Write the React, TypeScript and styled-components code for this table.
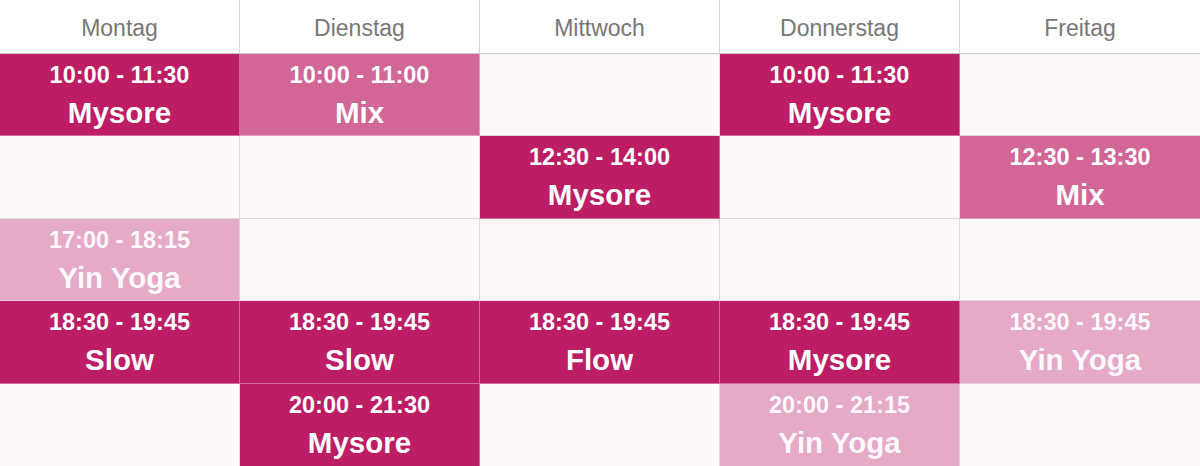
import React from "react";
import styled, { createGlobalStyle } from "styled-components";

const GlobalStyle = createGlobalStyle`
  html, body { margin: 0; padding: 0; background: #ffffff; }
  body { font-family: "Liberation Sans", Arial, sans-serif; }
  * { box-sizing: border-box; }
`;

type Tone = "dark" | "medium" | "light";

const toneColors: Record<Tone, string> = {
  dark: "#bc1d64",
  medium: "#d16697",
  light: "#e4aac8",
};

const Schedule = styled.div`
  display: grid;
  grid-template-columns: repeat(5, 1fr);
  grid-template-rows: 54px repeat(5, 1fr);
  width: 1200px;
  height: 466px;
`;

const HeaderCell = styled.div<{ $last: boolean }>`
  display: flex;
  align-items: center;
  justify-content: center;
  background: #ffffff;
  color: #777777;
  font-size: 23px;
  padding-top: 3px;
  border-bottom: 1px solid #c9c9c9;
  border-right: ${(p) => (p.$last ? "none" : "1px solid #d4d4d4")};
`;

const Cell = styled.div<{ $tone?: Tone; $last: boolean; $bottom: boolean }>`
  display: flex;
  flex-direction: column;
  align-items: center;
  padding-top: 8px;
  background: ${(p) => (p.$tone ? toneColors[p.$tone] : "#fcf8f9")};
  color: ${(p) => (p.$tone === "light" ? "rgba(255,255,255,0.95)" : "#ffffff")};
  font-weight: 700;
  border-bottom: ${(p) =>
    p.$bottom
      ? "none"
      : `1px solid ${p.$tone ? "rgba(255,255,255,0.35)" : "#dedadb"}`};
  border-right: ${(p) =>
    p.$last
      ? "none"
      : `1px solid ${p.$tone ? "rgba(255,255,255,0.35)" : "#dedadb"}`};
`;

const Time = styled.div`
  font-size: 23.5px;
  line-height: 26px;
`;

const ClassName = styled.div`
  font-size: 29.5px;
  line-height: 32px;
  margin-top: 9px;
`;

type Slot = { time: string; name: string; tone: Tone } | null;

const days = ["Montag", "Dienstag", "Mittwoch", "Donnerstag", "Freitag"];

const columns: Slot[][] = [
  [
    { time: "10:00 - 11:30", name: "Mysore", tone: "dark" },
    null,
    { time: "17:00 - 18:15", name: "Yin Yoga", tone: "light" },
    { time: "18:30 - 19:45", name: "Slow", tone: "dark" },
    null,
  ],
  [
    { time: "10:00 - 11:00", name: "Mix", tone: "medium" },
    null,
    null,
    { time: "18:30 - 19:45", name: "Slow", tone: "dark" },
    { time: "20:00 - 21:30", name: "Mysore", tone: "dark" },
  ],
  [
    null,
    { time: "12:30 - 14:00", name: "Mysore", tone: "dark" },
    null,
    { time: "18:30 - 19:45", name: "Flow", tone: "dark" },
    null,
  ],
  [
    { time: "10:00 - 11:30", name: "Mysore", tone: "dark" },
    null,
    null,
    { time: "18:30 - 19:45", name: "Mysore", tone: "dark" },
    { time: "20:00 - 21:15", name: "Yin Yoga", tone: "light" },
  ],
  [
    null,
    { time: "12:30 - 13:30", name: "Mix", tone: "medium" },
    null,
    { time: "18:30 - 19:45", name: "Yin Yoga", tone: "light" },
    null,
  ],
];

export default function App() {
  const rows = [0, 1, 2, 3, 4];
  return (
    <>
      <GlobalStyle />
      <Schedule>
        {days.map((d, i) => (
          <HeaderCell key={d} $last={i === days.length - 1}>
            {d}
          </HeaderCell>
        ))}
        {rows.map((r) =>
          columns.map((col, c) => {
            const slot = col[r];
            return (
              <Cell
                key={`${r}-${c}`}
                $tone={slot?.tone}
                $last={c === 4}
                $bottom={r === 4}
              >
                {slot && (
                  <>
                    <Time>{slot.time}</Time>
                    <ClassName>{slot.name}</ClassName>
                  </>
                )}
              </Cell>
            );
          })
        )}
      </Schedule>
    </>
  );
}
